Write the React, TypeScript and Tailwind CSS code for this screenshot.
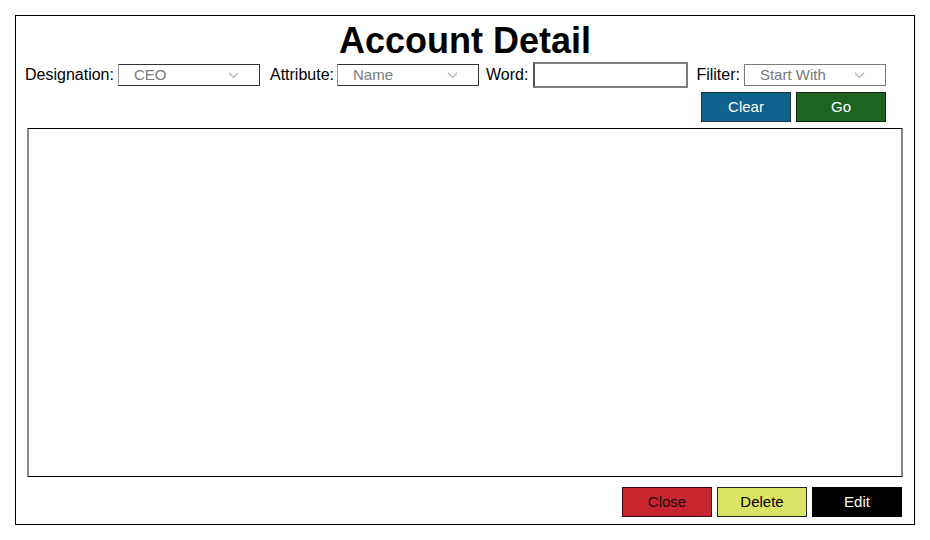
import React from 'react'

const font = { fontFamily: '"Liberation Sans", Arial, sans-serif' }

function Chevron() {
  return (
    <svg width="11" height="7" viewBox="0 0 11 7" className="shrink-0">
      <path d="M1 1 L5.5 5.5 L10 1" fill="none" stroke="#b0b0b0" strokeWidth="1.2" />
    </svg>
  )
}

function Select({ value, className = '' }: { value: string; className?: string }) {
  return (
    <div
      className={`flex items-center justify-between w-[142px] h-[22px] pl-[15px] pr-[20px] text-[15px] text-[#7a7a7a] bg-white ${className}`}
    >
      <span className="leading-none -mt-[1px]">{value}</span>
      <Chevron />
    </div>
  )
}

function Btn({ label, className }: { label: string; className: string }) {
  return (
    <button className={`w-[90px] h-[30px] text-[15px] border flex items-center justify-center ${className}`}>
      {label}
    </button>
  )
}

export default function App() {
  return (
    <div className="w-[930px] h-[540px] bg-white pt-[15px] pl-[15px]" style={font}>
      <div className="w-[900px] h-[510px] border border-black flex flex-col">
        {/* Title */}
        <h1 className="mt-[7px] text-center text-[36px] leading-[36px] font-bold text-black">Account Detail</h1>

        {/* Filters */}
        <div className="mt-[3px] h-[26px] flex items-center pl-[9px] text-[16px] text-black">
          <span>Designation:</span>
          <Select value="CEO" className="ml-[4px] border border-[#333] border-l-[#9a9a9a]" />
          <span className="ml-[10px]">Attribute:</span>
          <Select value="Name" className="ml-[3px] border border-[#333] border-l-[#9a9a9a]" />
          <span className="ml-[7px]">Word:</span>
          <div className="ml-[5px] w-[155px] h-[26px] border-2 border-[#7d7d7d] border-l-[#555] bg-white" />
          <span className="ml-[8px]">Filiter:</span>
          <Select value="Start With" className="ml-[4px] border border-[#7a7a7a]" />
        </div>

        {/* Clear / Go */}
        <div className="mt-[4px] flex justify-end gap-[5px] pr-[28px]">
          <Btn label="Clear" className="bg-[#10618b] border-[#1d3442] text-white" />
          <Btn label="Go" className="bg-[#1d6420] border-[#0d2a0f] text-white" />
        </div>

        {/* Data area */}
        <div className="mt-[6px] mx-[11px] h-[349px] border-y border-y-black border-x-2 border-x-[#888]" />

        {/* Bottom actions */}
        <div className="mt-[10px] flex justify-end gap-[5px] pr-[12px]">
          <Btn label="Close" className="bg-[#c8252f] border-[#3a0a0d] text-[#1a0a0a]" />
          <Btn label="Delete" className="bg-[#dbe565] border-[#222] text-black" />
          <Btn label="Edit" className="bg-black border-black text-white" />
        </div>
      </div>
    </div>
  )
}
